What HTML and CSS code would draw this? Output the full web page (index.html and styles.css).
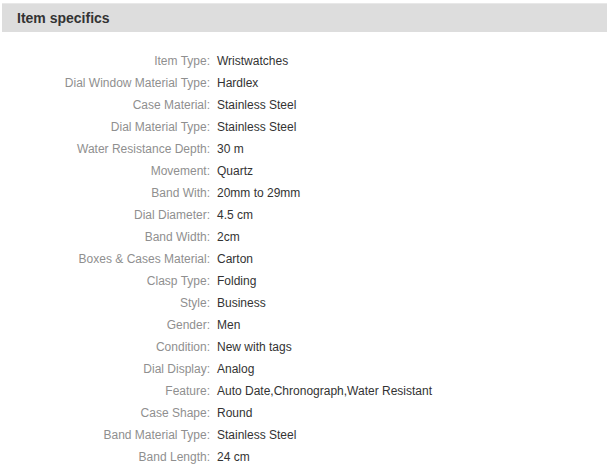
FILE: index.html
```html
<!DOCTYPE html>
<html>
<head>
<meta charset="utf-8">
<link rel="stylesheet" href="styles.css">
</head>
<body>
<div class="section">
  <h2 class="section-title">Item specifics</h2>
  <div class="specs">
    <div class="label">Item Type:</div><div class="value">Wristwatches</div>
    <div class="label">Dial Window Material Type:</div><div class="value">Hardlex</div>
    <div class="label">Case Material:</div><div class="value">Stainless Steel</div>
    <div class="label">Dial Material Type:</div><div class="value">Stainless Steel</div>
    <div class="label">Water Resistance Depth:</div><div class="value">30 m</div>
    <div class="label">Movement:</div><div class="value">Quartz</div>
    <div class="label">Band With:</div><div class="value">20mm to 29mm</div>
    <div class="label">Dial Diameter:</div><div class="value">4.5 cm</div>
    <div class="label">Band Width:</div><div class="value">2cm</div>
    <div class="label">Boxes &amp; Cases Material:</div><div class="value">Carton</div>
    <div class="label">Clasp Type:</div><div class="value">Folding</div>
    <div class="label">Style:</div><div class="value">Business</div>
    <div class="label">Gender:</div><div class="value">Men</div>
    <div class="label">Condition:</div><div class="value">New with tags</div>
    <div class="label">Dial Display:</div><div class="value">Analog</div>
    <div class="label">Feature:</div><div class="value">Auto Date,Chronograph,Water Resistant</div>
    <div class="label">Case Shape:</div><div class="value">Round</div>
    <div class="label">Band Material Type:</div><div class="value">Stainless Steel</div>
    <div class="label">Band Length:</div><div class="value">24 cm</div>
  </div>
</div>
</body>
</html>
```

FILE: styles.css
```css
html, body {
  margin: 0;
  padding: 0;
  background: #fff;
}
body {
  font-family: "Liberation Sans", Arial, sans-serif;
}
.section {
  padding: 3px 0 0 2px;
}
.section-title {
  margin: 0;
  height: 29px;
  line-height: 29px;
  padding-left: 15px;
  background: #dddddd;
  border-top: 1px solid #e8e8e8;
  box-sizing: border-box;
  font-size: 14px;
  font-weight: bold;
  color: #333;
}
.specs {
  display: grid;
  grid-template-columns: 208px auto;
  column-gap: 7px;
  margin-top: 18px;
  font-size: 12px;
  line-height: 22px;
}
.label {
  text-align: right;
  color: #8f8f8f;
}
.value {
  color: #333;
}
```
